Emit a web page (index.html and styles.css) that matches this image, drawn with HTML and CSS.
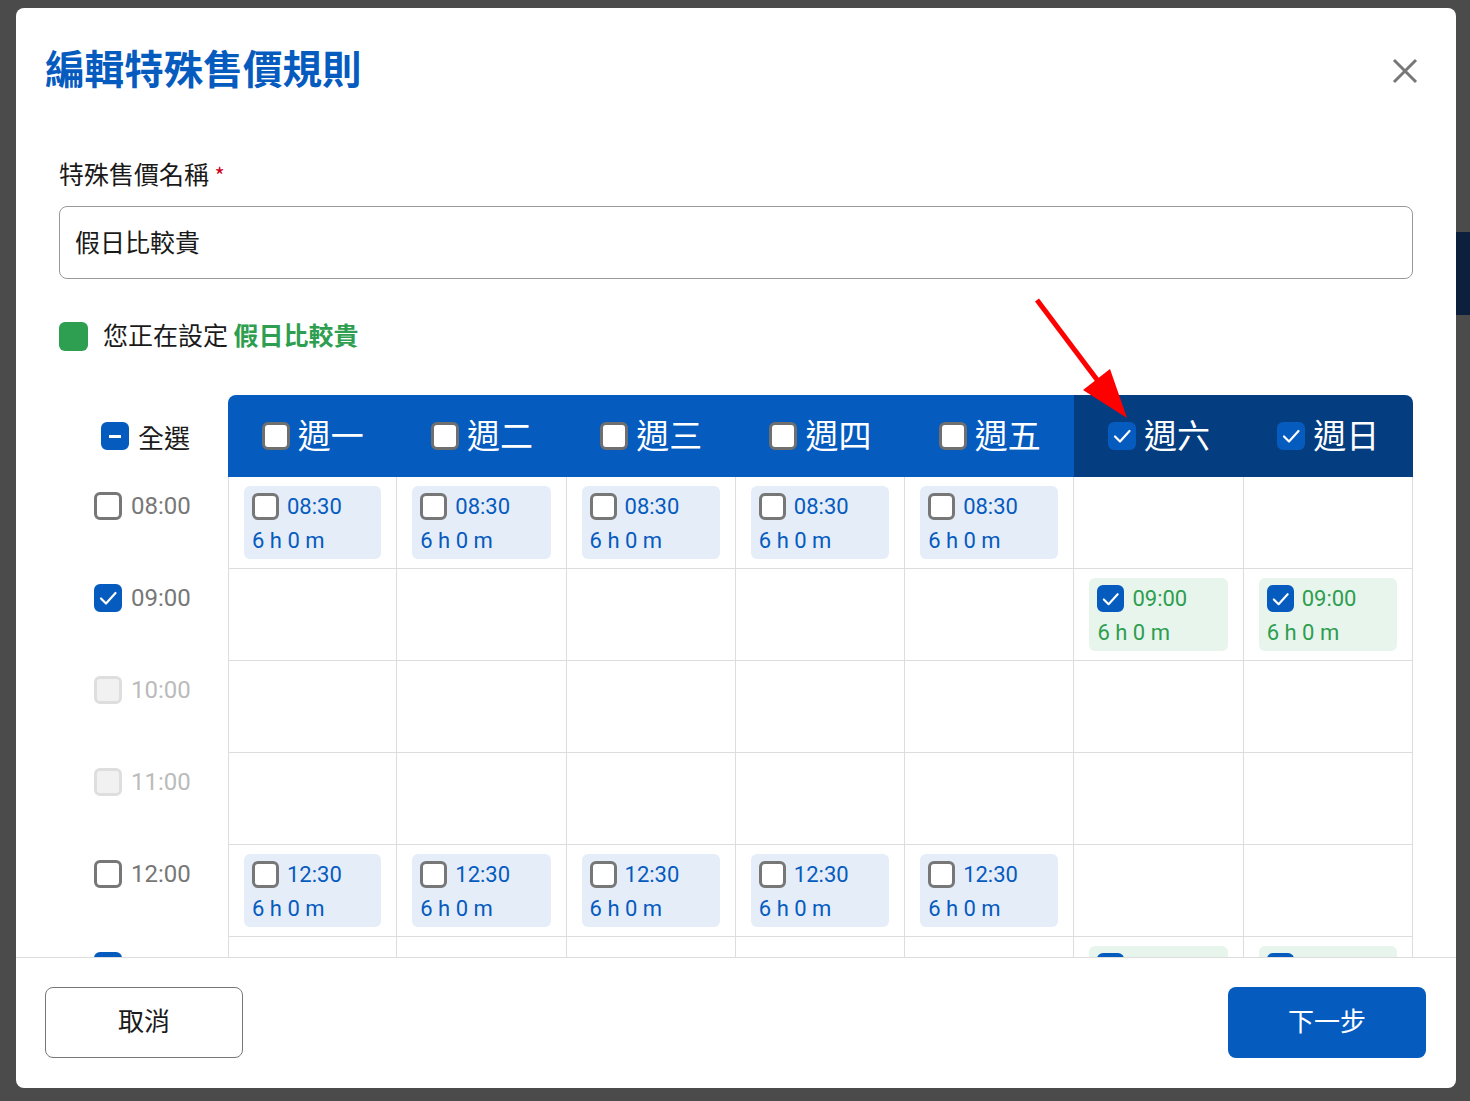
FILE: index.html
```html
<!DOCTYPE html>
<html lang="zh-Hant">
<head>
    <meta charset="UTF-8">
    <meta name="viewport" content="width=device-width, initial-scale=1.0">
    <title>編輯特殊售價規則</title>
    <link rel="stylesheet" href="styles.css">
</head>
<body>
    <div class="overlay">
        <div class="modal">
            <div class="modal-header">
                <h2 class="modal-title">編輯特殊售價規則</h2>
                <button class="close-btn" aria-label="close">
                    <svg width="28" height="28" viewBox="0 0 28 28"><path d="M3 3L25 25M25 3L3 25" stroke="#777" stroke-width="3" fill="none"/></svg>
                </button>
            </div>

            <div class="modal-body">
                <label class="field-label">特殊售價名稱 <span class="required">*</span></label>
                <input class="text-input" type="text" value="假日比較貴">

                <div class="legend">
                    <span class="legend-swatch"></span>
                    <span class="legend-text">您正在設定 <strong>假日比較貴</strong></span>
                </div>

                <div class="schedule" id="schedule"></div>
            </div>

            <div class="modal-footer">
                <button class="btn btn-outline">取消</button>
                <button class="btn btn-primary">下一步</button>
            </div>
        </div>

        <svg class="pointer-arrow" width="110" height="130" viewBox="0 0 110 130">
            <line x1="7" y1="5" x2="68" y2="86" stroke="#ff0000" stroke-width="5"/>
            <polygon points="97,123 53,95 80,74" fill="#ff0000"/>
        </svg>
    </div>

    <script>
        const check = '<svg width="22" height="22" viewBox="0 0 22 22"><path d="M4 11.5L9 16.5L18.5 6" stroke="#fff" stroke-width="2.2" fill="none" stroke-linecap="round" stroke-linejoin="round"/></svg>';

        function box(state) {
            const cls = state ? 'cb ' + state : 'cb';
            return `<span class="${cls}">${state === 'checked' ? check : ''}</span>`;
        }

        const days = ['週一', '週二', '週三', '週四', '週五', '週六', '週日'];
        const weekend = [false, false, false, false, false, true, true];

        // time, row state, slot label (null = empty), weekday/weekend
        const rows = [
            { time: '08:00', state: '', weekday: '08:30', weekendSlot: null },
            { time: '09:00', state: 'checked', weekday: null, weekendSlot: '09:00' },
            { time: '10:00', state: 'disabled', weekday: null, weekendSlot: null },
            { time: '11:00', state: 'disabled', weekday: null, weekendSlot: null },
            { time: '12:00', state: '', weekday: '12:30', weekendSlot: null },
            { time: '13:00', state: 'checked', weekday: null, weekendSlot: '13:00' }
        ];

        let html = `<div class="corner">${box('indeterminate')}<span>全選</span></div>`;
        days.forEach((d, i) => {
            const cls = weekend[i] ? 'day-head weekend' : 'day-head';
            html += `<div class="${cls}">${box(weekend[i] ? 'checked' : '')}<span>${d}</span></div>`;
        });

        rows.forEach(r => {
            html += `<div class="time-cell ${r.state}">${box(r.state)}<span>${r.time}</span></div>`;
            days.forEach((d, i) => {
                const slot = weekend[i] ? r.weekendSlot : r.weekday;
                let inner = '';
                if (slot) {
                    const kind = weekend[i] ? 'slot active' : 'slot';
                    inner = `<div class="${kind}"><div class="slot-top">${box(weekend[i] ? 'checked' : '')}<span>${slot}</span></div><div class="slot-len">6 h 0 m</div></div>`;
                }
                html += `<div class="day-cell${i === 0 ? ' first' : ''}">${inner}</div>`;
            });
        });

        document.getElementById('schedule').innerHTML = html;
    </script>
</body>
</html>
```

FILE: styles.css
```css
:root {
    --primary: #065bbf;
    --navy: #043d80;
    --green: #2e9e50;
    --slot-blue: #e5edf8;
    --slot-green: #e8f5ec;
    --line: #dddddd;
    --muted: #777777;
    --text: #1a1a1a;
}

* {
    margin: 0;
    padding: 0;
    box-sizing: border-box;
}

body {
    font-family: Roboto, "Noto Sans CJK TC", sans-serif;
    color: var(--text);
    background:
        linear-gradient(#0c1f3d, #0c1f3d) right 0 top 232px / 14px 83px no-repeat,
        #4b4b4b;
    width: 1470px;
    height: 1101px;
    overflow: hidden;
}

.overlay {
    position: relative;
    padding: 8px 14px 13px 16px;
}

.modal {
    width: 1440px;
    height: 1080px;
    background: #fff;
    border-radius: 8px;
    display: flex;
    flex-direction: column;
    overflow: hidden;
}

.modal-header {
    display: flex;
    justify-content: space-between;
    align-items: center;
    padding: 35px 37px 0 29px;
}

.modal-title {
    font-family: "Noto Sans CJK TC", sans-serif;
    font-size: 39.6px;
    line-height: 48px;
    font-weight: 700;
    color: var(--primary);
}

.close-btn {
    background: none;
    border: none;
    width: 28px;
    height: 28px;
    margin-top: 8px;
    cursor: pointer;
}

.modal-body {
    flex: 1;
    overflow: hidden;
    padding: 67px 43px 0 43px;
}

.field-label {
    display: block;
    font-family: "Noto Sans CJK TC", sans-serif;
    font-size: 25px;
    line-height: 32px;
    margin-top: -1px;
}

.required {
    color: #d0021b;
    font-size: 22px;
}

.text-input {
    display: block;
    width: 100%;
    height: 73px;
    margin-top: 16px;
    padding: 0 15px 3px;
    border: 1px solid #999;
    border-radius: 8px;
    font-family: "Noto Sans CJK TC", sans-serif;
    font-size: 25px;
    color: var(--text);
}

.legend {
    display: flex;
    align-items: center;
    gap: 15px;
    margin-top: 43px;
    height: 29px;
    font-family: "Noto Sans CJK TC", sans-serif;
    font-size: 25px;
}

.legend-text {
    padding-bottom: 5px;
}

.legend strong {
    color: var(--green);
}

.legend-swatch {
    width: 29px;
    height: 29px;
    border-radius: 6px;
    background: var(--green);
}

.schedule {
    display: grid;
    grid-template-columns: 169px repeat(7, 1fr);
    grid-template-rows: 82px;
    grid-auto-rows: 92px;
    margin-top: 44px;
}

.cb {
    flex: none;
    display: inline-flex;
    align-items: center;
    justify-content: center;
    width: 28px;
    height: 28px;
    border: 3px solid var(--muted);
    border-radius: 6px;
    background: #fff;
}

.cb.checked {
    background: var(--primary);
    border-color: var(--primary);
}

.cb.indeterminate {
    background: var(--primary);
    border-color: var(--primary);
}

.cb.indeterminate::after {
    content: "";
    width: 12px;
    height: 3px;
    background: #fff;
}

.cb.disabled {
    background: #f1f1f1;
    border-color: #dedede;
}

.corner {
    display: flex;
    align-items: center;
    gap: 9px;
    padding-left: 42px;
    font-family: "Noto Sans CJK TC", sans-serif;
    font-size: 26px;
}

.day-head {
    display: flex;
    align-items: center;
    justify-content: center;
    gap: 8px;
    background: var(--primary);
    color: #fff;
    font-family: "Noto Sans CJK TC", sans-serif;
    font-size: 33px;
}

.day-head span:last-child {
    padding-bottom: 4px;
}

.day-head:nth-child(2) {
    border-top-left-radius: 8px;
}

.day-head:nth-child(8) {
    border-top-right-radius: 8px;
}

.day-head.weekend {
    background: var(--navy);
}

.day-head .cb {
    border-color: #6f6f6f;
}

.day-head .cb.checked {
    border-color: var(--primary);
}

.time-cell {
    display: flex;
    align-items: flex-start;
    gap: 9px;
    padding: 15px 0 0 35px;
    font-size: 24px;
    line-height: 28px;
    color: var(--muted);
}

.time-cell.disabled {
    color: #bbbbbb;
}

.day-cell {
    border-right: 1px solid var(--line);
    border-bottom: 1px solid var(--line);
    padding: 9px 15px 0 15px;
}

.day-cell.first {
    border-left: 1px solid var(--line);
}

.slot {
    height: 73px;
    border-radius: 6px;
    background: var(--slot-blue);
    color: var(--primary);
    padding: 7px 8px 0;
    font-size: 22px;
}

.slot.active {
    background: var(--slot-green);
    color: var(--green);
}

.slot-top {
    display: flex;
    align-items: center;
    gap: 8px;
    height: 27px;
}

.slot .cb {
    width: 27px;
    height: 27px;
}

.slot-len {
    margin-top: 7px;
    line-height: 28px;
}

.modal-footer {
    display: flex;
    justify-content: space-between;
    border-top: 1px solid var(--line);
    padding: 29px 30px 30px 29px;
}

.btn {
    width: 198px;
    height: 71px;
    padding-bottom: 6px;
    border-radius: 8px;
    font-family: "Noto Sans CJK TC", sans-serif;
    font-size: 26px;
    cursor: pointer;
}

.btn-outline {
    background: #fff;
    border: 1px solid var(--muted);
    color: var(--text);
}

.btn-primary {
    background: var(--primary);
    border: none;
    color: #fff;
}

.pointer-arrow {
    position: absolute;
    left: 1030px;
    top: 295px;
}
```
